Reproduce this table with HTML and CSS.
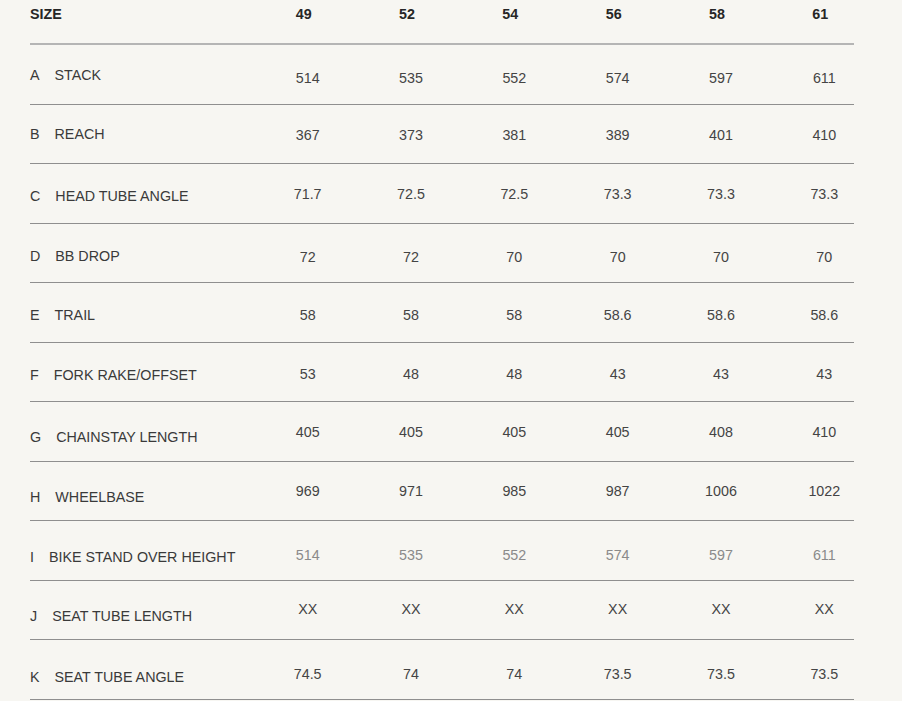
FILE: index.html
```html
<!DOCTYPE html>
<html>
<head>
<meta charset="utf-8">
<link rel="stylesheet" href="styles.css">
</head>
<body>
<div class="geo">
  <div class="row head">
    <div class="label">SIZE</div>
    <div class="val">49</div><div class="val">52</div><div class="val">54</div><div class="val">56</div><div class="val">58</div><div class="val">61</div>
  </div>
  <div class="row">
    <div class="label"><span class="key">A</span>STACK</div>
    <div class="val">514</div><div class="val">535</div><div class="val">552</div><div class="val">574</div><div class="val">597</div><div class="val">611</div>
  </div>
  <div class="row">
    <div class="label"><span class="key">B</span>REACH</div>
    <div class="val">367</div><div class="val">373</div><div class="val">381</div><div class="val">389</div><div class="val">401</div><div class="val">410</div>
  </div>
  <div class="row">
    <div class="label"><span class="key">C</span>HEAD TUBE ANGLE</div>
    <div class="val">71.7</div><div class="val">72.5</div><div class="val">72.5</div><div class="val">73.3</div><div class="val">73.3</div><div class="val">73.3</div>
  </div>
  <div class="row">
    <div class="label"><span class="key">D</span>BB DROP</div>
    <div class="val">72</div><div class="val">72</div><div class="val">70</div><div class="val">70</div><div class="val">70</div><div class="val">70</div>
  </div>
  <div class="row">
    <div class="label"><span class="key">E</span>TRAIL</div>
    <div class="val">58</div><div class="val">58</div><div class="val">58</div><div class="val">58.6</div><div class="val">58.6</div><div class="val">58.6</div>
  </div>
  <div class="row">
    <div class="label"><span class="key">F</span>FORK RAKE/OFFSET</div>
    <div class="val">53</div><div class="val">48</div><div class="val">48</div><div class="val">43</div><div class="val">43</div><div class="val">43</div>
  </div>
  <div class="row">
    <div class="label"><span class="key">G</span>CHAINSTAY LENGTH</div>
    <div class="val">405</div><div class="val">405</div><div class="val">405</div><div class="val">405</div><div class="val">408</div><div class="val">410</div>
  </div>
  <div class="row">
    <div class="label"><span class="key">H</span>WHEELBASE</div>
    <div class="val">969</div><div class="val">971</div><div class="val">985</div><div class="val">987</div><div class="val">1006</div><div class="val">1022</div>
  </div>
  <div class="row muted">
    <div class="label"><span class="key">I</span>BIKE STAND OVER HEIGHT</div>
    <div class="val">514</div><div class="val">535</div><div class="val">552</div><div class="val">574</div><div class="val">597</div><div class="val">611</div>
  </div>
  <div class="row">
    <div class="label"><span class="key">J</span>SEAT TUBE LENGTH</div>
    <div class="val">XX</div><div class="val">XX</div><div class="val">XX</div><div class="val">XX</div><div class="val">XX</div><div class="val">XX</div>
  </div>
  <div class="row">
    <div class="label"><span class="key">K</span>SEAT TUBE ANGLE</div>
    <div class="val">74.5</div><div class="val">74</div><div class="val">74</div><div class="val">73.5</div><div class="val">73.5</div><div class="val">73.5</div>
  </div>
</div>
</body>
</html>
```

FILE: styles.css
```css
html, body {
  margin: 0;
  padding: 0;
  background: #f7f6f2;
}

body {
  font-family: "Liberation Sans", Arial, sans-serif;
  font-size: 14.3px;
  color: #3a3a3a;
}

.geo {
  margin-left: 30px;
  width: 824px;
}

.row {
  --lo: 0;
  --vo: 0;
  display: grid;
  grid-template-columns: 226px repeat(6, 103.33px);
  align-items: center;
  box-sizing: border-box;
  height: 60px;
  border-bottom: 1.5px solid #8f8f8f;
  line-height: 16px;
}

.row:nth-child(odd) {
  height: 59px;
}

/* slight baseline drift of the original table */
.row:nth-child(2)  { --lo: 0; --vo: 3; }
.row:nth-child(3)  { --lo: 0; --vo: 1; }
.row:nth-child(4)  { --lo: 2; --vo: 0; }
.row:nth-child(5)  { --lo: 3; --vo: 4; }
.row:nth-child(6)  { --lo: 2; --vo: 2; }
.row:nth-child(7)  { --lo: 3; --vo: 2; }
.row:nth-child(8)  { --lo: 5; --vo: 0; }
.row:nth-child(9)  { --lo: 6; --vo: 0; }
.row:nth-child(10) { --lo: 6; --vo: 4; }
.row:nth-child(11) { --lo: 6; --vo: -1; }
.row:nth-child(12) { --lo: 7; --vo: 4; }

.row.head {
  height: 45px;
  align-items: start;
  padding-top: 6px;
  border-bottom: 2px solid #b5b5b5;
  font-weight: bold;
  color: #262626;
}

.label {
  display: flex;
  white-space: nowrap;
  margin-top: calc(var(--lo) * 2px);
}

.key {
  margin-right: 15px;
}

.val {
  text-align: center;
  color: #444;
  white-space: nowrap;
  margin-top: calc(var(--vo) * 2px);
}

.head .val {
  color: #262626;
  padding-right: 8px;
}

.muted .val {
  color: #8a8a8a;
}
```
